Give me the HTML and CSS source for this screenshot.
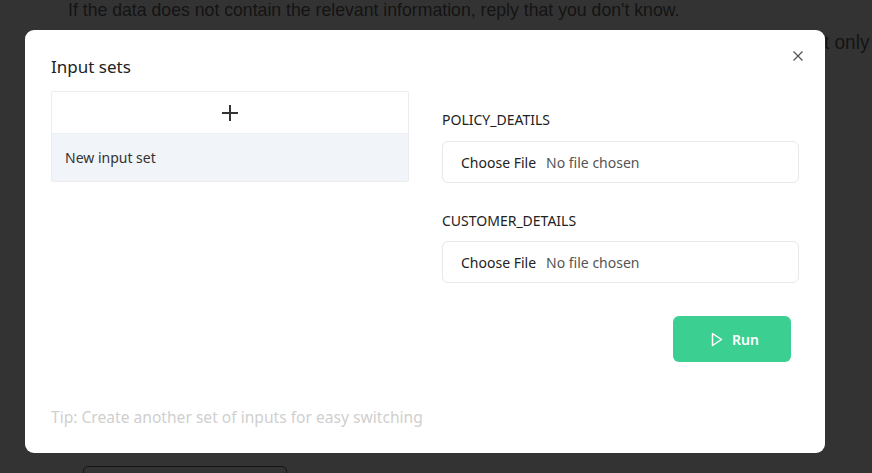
FILE: index.html
```html
<!DOCTYPE html>
<html>
<head>
<meta charset="utf-8">
<link rel="stylesheet" href="styles.css">
</head>
<body>
<div class="backdrop">
  <p class="bg-line bg-line-1">If the data does not contain the relevant information, reply that you don't know.</p>
  <p class="bg-line bg-line-2">t only</p>
  <div class="bg-box"></div>
</div>
<div class="modal">
  <div class="modal-head">
    <h2 class="title">Input sets</h2>
    <button class="close" aria-label="Close">
      <svg width="12" height="12" viewBox="0 0 12 12"><path d="M1.5 1.5 L10.5 10.5 M10.5 1.5 L1.5 10.5" stroke="#555" stroke-width="1.3" fill="none"/></svg>
    </button>
  </div>
  <div class="modal-body">
    <div class="sets">
      <div class="add-row">
        <svg width="18" height="18" viewBox="0 0 18 18"><path d="M9 1 V17 M1 9 H17" stroke="#333" stroke-width="2" fill="none"/></svg>
      </div>
      <div class="set-item">New input set</div>
    </div>
    <div class="fields">
      <label class="field-label">POLICY_DEATILS</label>
      <div class="file-box"><span class="choose">Choose File</span><span class="nofile">No file chosen</span></div>
      <label class="field-label second">CUSTOMER_DETAILS</label>
      <div class="file-box"><span class="choose">Choose File</span><span class="nofile">No file chosen</span></div>
      <div class="actions">
        <button class="run">
          <svg width="12" height="15" viewBox="0 0 12 15"><path d="M1.5 1.5 L10.5 7.5 L1.5 13.5 Z" stroke="#fff" stroke-width="1.5" fill="none" stroke-linejoin="round"/></svg>
          <span>Run</span>
        </button>
      </div>
    </div>
  </div>
  <p class="tip">Tip: Create another set of inputs for easy switching</p>
</div>
</body>
</html>
```
FILE: styles.css
```css
html, body {
  margin: 0;
  padding: 0;
  width: 872px;
  height: 473px;
  overflow: hidden;
  background: #333333;
  font-family: "Noto Sans", "Open Sans", sans-serif;
}
.backdrop {
  position: absolute;
  inset: 0;
}
.bg-line {
  position: absolute;
  margin: 0;
  font-family: "Liberation Sans", Arial, sans-serif;
  font-size: 19px;
  color: #141414;
  white-space: nowrap;
}
.bg-line-1 {
  left: 68px;
  top: -1px;
  transform: scaleX(0.93);
  transform-origin: left top;
}
.bg-line-2 {
  left: 824px;
  top: 31px;
  font-size: 20px;
  transform: scaleX(0.95);
  transform-origin: left top;
}
.bg-box {
  position: absolute;
  left: 83px;
  top: 466px;
  width: 202px;
  height: 20px;
  border: 1px solid #151515;
  border-radius: 5px;
}
.modal {
  position: absolute;
  left: 25px;
  top: 30px;
  width: 800px;
  height: 423px;
  box-sizing: border-box;
  background: #fff;
  border-radius: 9px;
  padding: 0 26px;
  display: flex;
  flex-direction: column;
}
.modal-head {
  display: flex;
  justify-content: space-between;
  align-items: flex-start;
  height: 61px;
}
.title {
  margin: 25px 0 0;
  font-size: 17px;
  font-weight: 400;
  color: #222;
  line-height: 24px;
}
.close {
  margin: 20px -5px 0 0;
  padding: 0;
  border: 0;
  background: none;
  width: 12px;
  height: 12px;
  display: flex;
}
.modal-body {
  display: grid;
  grid-template-columns: 358px 357px;
  column-gap: 33px;
}
.sets {
  border: 1px solid #ececec;
  border-radius: 2px;
  align-self: start;
}
.add-row {
  height: 41px;
  display: flex;
  align-items: center;
  justify-content: center;
  border-bottom: 1px solid #eceef1;
}
.set-item {
  height: 47px;
  background: #f1f4f8;
  padding-left: 13px;
  display: flex;
  align-items: center;
  font-size: 14px;
  color: #333;
}
.fields {
  display: flex;
  flex-direction: column;
  padding-top: 19px;
}
.field-label {
  font-size: 14px;
  line-height: 20px;
  color: #222;
  margin-bottom: 11px;
}
.field-label.second {
  margin-top: 28px;
  margin-bottom: 10px;
}
.file-box {
  height: 42px;
  box-sizing: border-box;
  border: 1px solid #e8e8e8;
  border-radius: 6px;
  display: flex;
  align-items: center;
  padding-left: 18px;
  font-size: 14px;
}
.choose {
  color: #222;
  margin-right: 10px;
}
.nofile {
  color: #555;
}
.actions {
  display: flex;
  justify-content: flex-end;
  padding-right: 8px;
  margin-top: 33px;
}
.run {
  width: 118px;
  height: 46px;
  border: 0;
  border-radius: 6px;
  background: #3ccf92;
  color: #fff;
  font-family: inherit;
  font-size: 14px;
  font-weight: 600;
  display: flex;
  align-items: center;
  justify-content: center;
  gap: 9px;
  padding: 0 0 0 6px;
}
.tip {
  margin: auto 0 26px;
  font-size: 15.6px;
  color: #cfcfcf;
  line-height: 20px;
}
```
